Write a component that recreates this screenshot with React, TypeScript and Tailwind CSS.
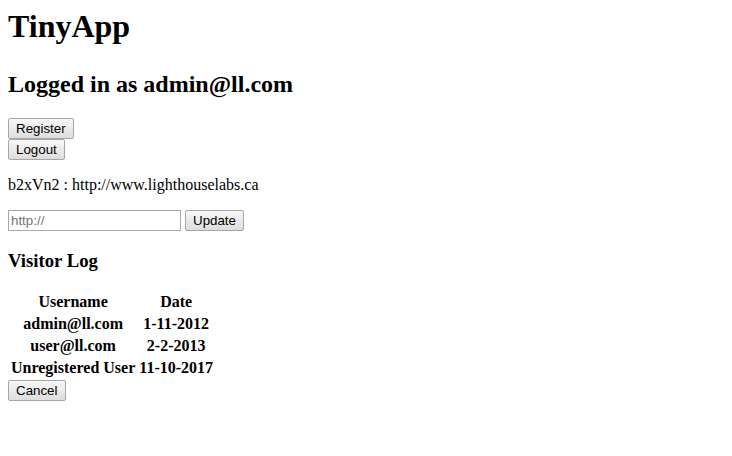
import React from "react";

const btn =
  "block font-['Liberation_Sans',Arial,sans-serif] text-[13.33px] leading-[15px] text-black px-[7px] py-[2px] border border-[#a6a6a6] rounded-[2px] bg-gradient-to-b from-[#f8f8f8] to-[#dddddd]";

export default function App() {
  return (
    <div className="min-h-[456px] bg-white p-2 font-['Liberation_Serif','Times_New_Roman',serif] text-black text-[16px] leading-[18px]">
      <h1 className="text-[32px] font-bold leading-[37px] mt-[0px] mb-[25px]">TinyApp</h1>
      <h2 className="text-[24px] font-bold leading-[28px] mb-[20px]">Logged in as admin@ll.com</h2>
      <form>
        <button type="button" className={btn}>Register</button>
      </form>
      <form>
        <button type="button" className={btn}>Logout</button>
      </form>
      <p className="my-4 leading-[18px]">b2xVn2 : http://www.lighthouselabs.ca</p>
      <form className="flex items-center gap-1">
        <input
          placeholder="http://"
          className="w-[173px] h-[21px] border border-[#a9a9a9] px-[2px] font-['Liberation_Sans',Arial,sans-serif] text-[13.33px] placeholder:text-[#757575] outline-none"
        />
        <button type="button" className={btn}>Update</button>
      </form>
      <h3 className="text-[18.72px] font-bold leading-[22px] mt-[18.72px] mb-[18.72px]">Visitor Log</h3>
      <table className="border-separate border-spacing-[2px] font-bold">
        <tbody>
          <tr>
            <td className="px-[1px] py-[1px] text-center">Username</td>
            <td className="px-[1px] py-[1px] text-center">Date</td>
          </tr>
          <tr>
            <td className="px-[1px] py-[1px] text-center">admin@ll.com</td>
            <td className="px-[1px] py-[1px] text-center">1-11-2012</td>
          </tr>
          <tr>
            <td className="px-[1px] py-[1px] text-center">user@ll.com</td>
            <td className="px-[1px] py-[1px] text-center">2-2-2013</td>
          </tr>
          <tr>
            <td className="px-[1px] py-[1px] text-center">Unregistered User</td>
            <td className="px-[1px] py-[1px] text-center">11-10-2017</td>
          </tr>
        </tbody>
      </table>
      <button type="button" className={btn}>Cancel</button>
    </div>
  );
}
